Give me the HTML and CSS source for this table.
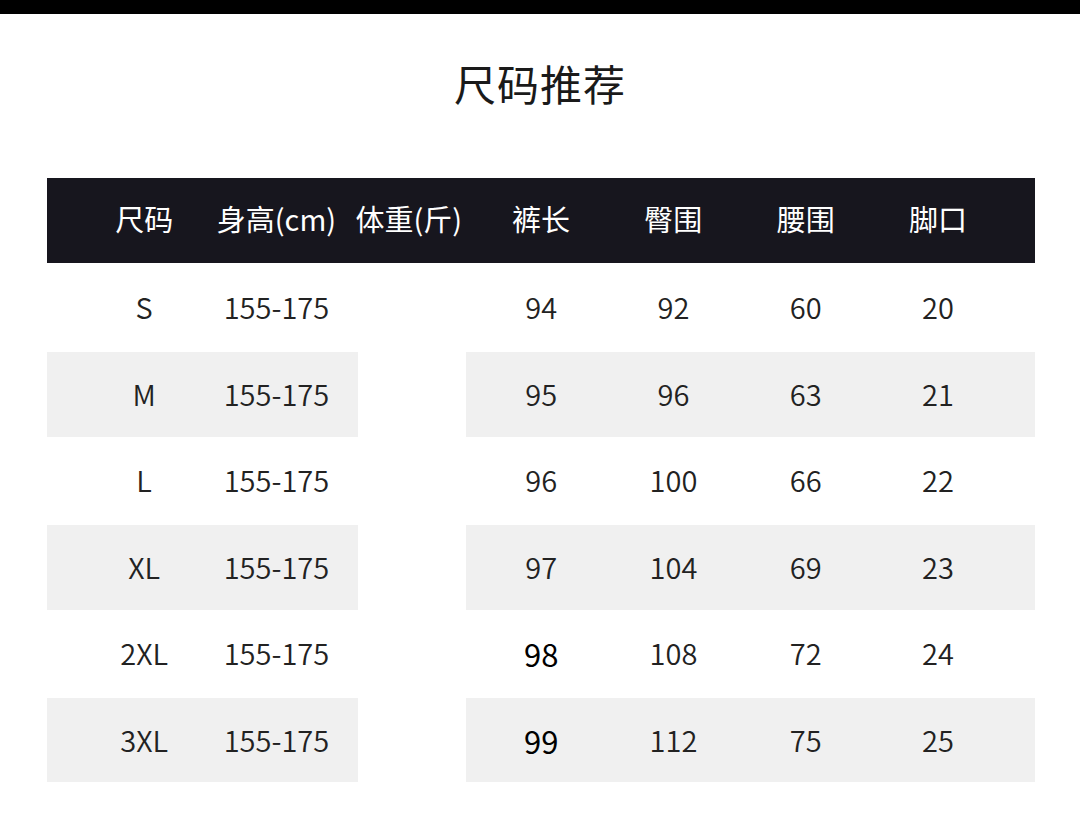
FILE: index.html
```html
<!DOCTYPE html>
<html lang="zh-CN">
<head>
<meta charset="utf-8">
<title>尺码推荐</title>
<link rel="stylesheet" href="styles.css">
</head>
<body>
<div class="topbar"></div>
<h1 class="title">尺码推荐</h1>
<div class="table">
  <div class="head">
    <div>尺码</div><div>身高(cm)</div><div>体重(斤)</div><div>裤长</div><div>臀围</div><div>腰围</div><div>脚口</div>
  </div>
  <div class="row">
    <div class="seg left"><div>S</div><div>155-175</div></div>
    <div class="gap"></div>
    <div class="seg right"><div>94</div><div>92</div><div>60</div><div>20</div></div>
  </div>
  <div class="row shade">
    <div class="seg left"><div>M</div><div>155-175</div></div>
    <div class="gap"></div>
    <div class="seg right"><div>95</div><div>96</div><div>63</div><div>21</div></div>
  </div>
  <div class="row">
    <div class="seg left"><div>L</div><div>155-175</div></div>
    <div class="gap"></div>
    <div class="seg right"><div>96</div><div>100</div><div>66</div><div>22</div></div>
  </div>
  <div class="row shade">
    <div class="seg left"><div>XL</div><div>155-175</div></div>
    <div class="gap"></div>
    <div class="seg right"><div>97</div><div>104</div><div>69</div><div>23</div></div>
  </div>
  <div class="row">
    <div class="seg left"><div>2XL</div><div>155-175</div></div>
    <div class="gap"></div>
    <div class="seg right"><div class="strong">98</div><div>108</div><div>72</div><div>24</div></div>
  </div>
  <div class="row shade">
    <div class="seg left"><div>3XL</div><div>155-175</div></div>
    <div class="gap"></div>
    <div class="seg right"><div class="strong">99</div><div>112</div><div>75</div><div>25</div></div>
  </div>
</div>
</body>
</html>
```

FILE: styles.css
```css
* { box-sizing: border-box; }
html, body { margin: 0; padding: 0; background: #fff; }
body {
  font-family: "Noto Sans CJK SC", "Noto Sans", sans-serif;
  color: #222;
  width: 1080px;
}
.topbar { height: 14px; background: #000; }
.title {
  margin: 39px 0 0;
  height: 60px;
  line-height: 60px;
  text-align: center;
  font-size: 42px;
  font-weight: 400;
  color: #1a1a1a;
  letter-spacing: 1px;
}
.table {
  margin: 65px 0 0 47px;
  width: 988px;
}
.head {
  height: 85px;
  background: #17161e;
  color: #fff;
  display: grid;
  grid-template-columns: repeat(7, 132.3px);
  padding: 0 31px 6px;
  align-items: center;
  font-size: 29px;
}
.head div { text-align: center; white-space: nowrap; }
.row {
  height: 86.5px;
  display: grid;
  grid-template-columns: 311px 108px 569px;
  padding: 2px 0 0;
  font-size: 29px;
  font-weight: 350;
}
.seg {
  display: grid;
  align-items: center;
  height: 85px;
}
.seg div { text-align: center; padding-bottom: 3px; }
.left { grid-template-columns: repeat(2, 132.3px); padding-left: 31px; }
.right { grid-template-columns: repeat(4, 132.3px); padding-left: 9px; }
.shade .seg { background: #f0f0f0; }
.seg .strong { color: #000; font-size: 31px; font-weight: 400; padding-bottom: 0; }
```
